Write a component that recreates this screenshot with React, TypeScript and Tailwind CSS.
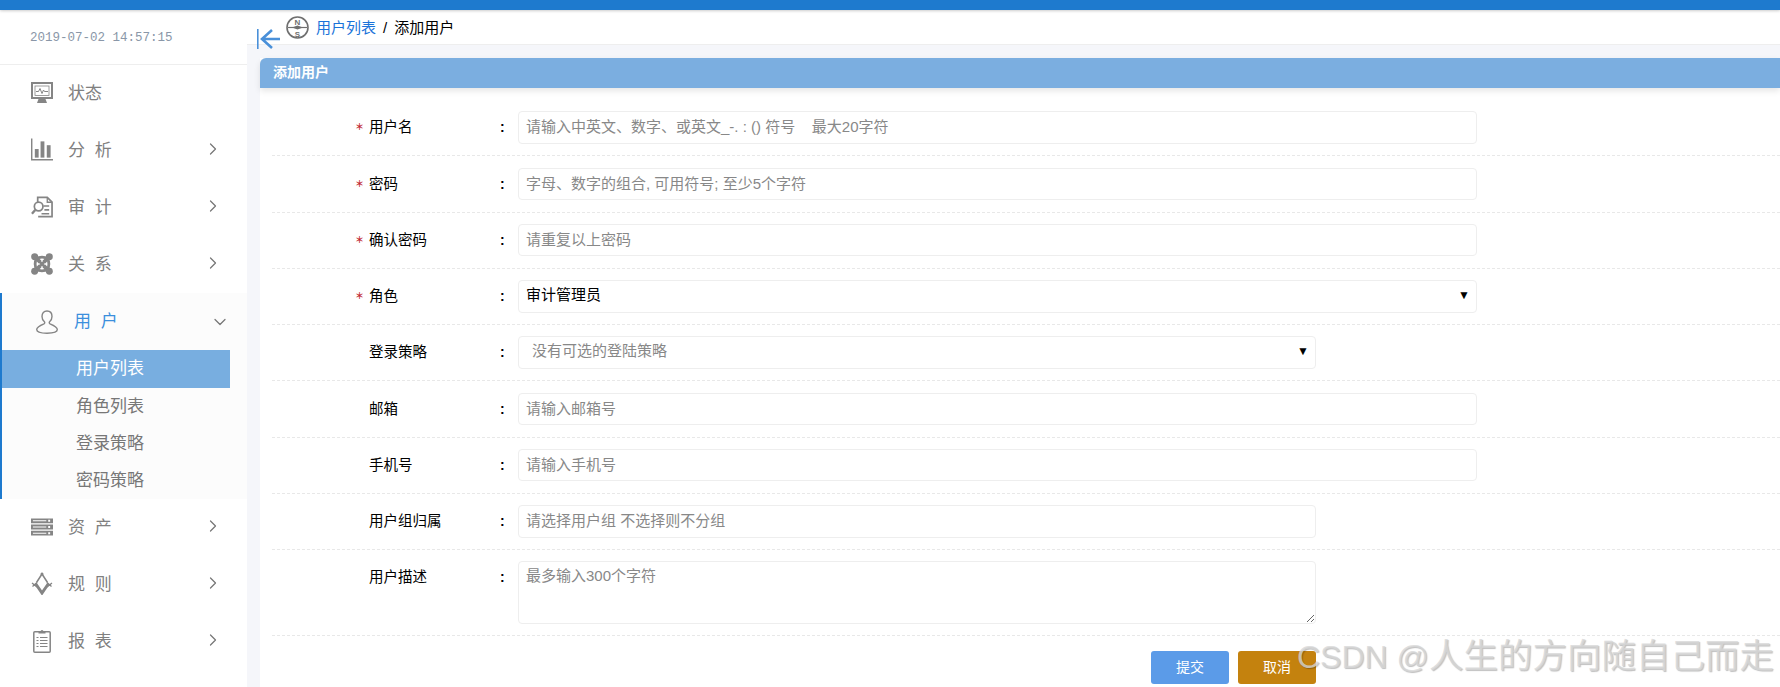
import { ChevronDown, ChevronRight } from 'lucide-react';
import type { ReactNode } from 'react';

const MonitorIcon = () => (
  <svg viewBox="0 0 22 22" className="w-[22px] h-[22px] text-[#858585]" fill="none" stroke="currentColor">
    <rect x="1" y="1" width="20" height="15" strokeWidth="2" />
    <rect x="4" y="4" width="14" height="9.5" strokeWidth="0.8" />
    <path d="M5 9.500h2.500l1.500-3 2 5 1.500-3.500 1 1.500H17" strokeWidth="1" />
    <path d="M7.500 17h7l1.500 4H6z" fill="currentColor" stroke="none" />
  </svg>
);

const BarsIcon = () => (
  <svg viewBox="0 0 23 23" className="w-[23px] h-[23px] text-[#858585]" fill="currentColor">
    <path d="M0 0h1.500v21.500H23V23H0z" />
    <rect x="4" y="11" width="4" height="9" />
    <rect x="10" y="3" width="4" height="17" />
    <rect x="16.500" y="7" width="4" height="13" />
  </svg>
);

const AuditIcon = () => (
  <svg viewBox="0 0 23 22" className="w-[23px] h-[22px] text-[#858585]" fill="none" stroke="currentColor" strokeWidth="1.800">
    <path d="M7 6V1h10l5 5v15H7.500" />
    <path d="M17 1v5h5" strokeWidth="1.400" />
    <circle cx="8" cy="10.500" r="4.500" />
    <path d="M4.500 14L1 18" strokeWidth="2.400" />
    <path d="M13 10h6M14 14h5M11 18h8" strokeWidth="1.600" />
  </svg>
);

const KnotIcon = () => (
  <svg viewBox="0 0 24 24" className="w-[24px] h-[24px] text-[#858585]" fill="none" stroke="currentColor">
    <path d="M4 4l6 6M20 4l-6 6M4 20l6-6M20 20l-6-6" strokeWidth="4.200" />
    <path d="M5 6.500q7-4 14 0M17.500 5q4 7 0 14M19 17.500q-7 4-14 0M6.500 19q-4-7 0-14" strokeWidth="3" />
    <path d="M9 9l6 6M15 9l-6 6" strokeWidth="3" />
    <g fill="currentColor" stroke="none">
      <circle cx="4" cy="4" r="3.800" />
      <circle cx="20" cy="4" r="3.800" />
      <circle cx="4" cy="20" r="3.800" />
      <circle cx="20" cy="20" r="3.800" />
    </g>
  </svg>
);

const UserIcon = () => (
  <svg viewBox="0 0 22 24" className="w-[22px] h-[24px] text-[#858585]" fill="none" stroke="currentColor" strokeWidth="1.400">
    <path d="M11 1c3.200 0 5 2.400 5 5.400 0 2.400-1 4.200-2.400 5.400-.6.600-.4 1.600.4 2 3.400 1.400 7.300 3 7.300 5.800 0 2.400-4.400 3.600-10.300 3.600S.7 22 .7 19.600c0-2.800 3.900-4.400 7.300-5.800.8-.4 1-1.400.4-2C7 10.600 6 8.800 6 6.400 6 3.400 7.800 1 11 1z" />
  </svg>
);

const ServerIcon = () => (
  <svg viewBox="0 0 23 18" className="w-[23px] h-[18px] text-[#858585]" fill="currentColor">
    <path fillRule="evenodd" d="M0 0h23v5H0zM2 2v1h14V2zM18 1.500v2h2v-2z" />
    <path fillRule="evenodd" d="M0 6.500h23v5H0zM2 8.500v1h14v-1zM18 8v2h2V8z" />
    <path fillRule="evenodd" d="M0 13h23v5H0zM2 15v1h14v-1zM18 14.500v2h2v-2z" />
  </svg>
);

const RuleIcon = () => (
  <svg viewBox="0 0 22 23" className="w-[22px] h-[23px] text-[#858585]" fill="none" stroke="currentColor">
    <path d="M4.500 11.500L11 21l6.500-9.500" strokeWidth="3" />
    <path d="M5.500 10.500L11 2l5.500 8.500" strokeWidth="1.500" />
    <path d="M1 11l5 4M21 11l-5 4M1.500 14.500l4.500-4M20.500 14.500L16 10.500" strokeWidth="1.300" />
    <circle cx="11" cy="2" r="1.500" fill="currentColor" stroke="none" />
  </svg>
);

const ClipboardIcon = () => (
  <svg viewBox="0 0 18 24" className="w-[18px] h-[24px] text-[#858585]" fill="none" stroke="currentColor">
    <rect x="0.800" y="2.800" width="16.400" height="20.400" rx="1" strokeWidth="1.500" />
    <path d="M5.500 4.500V2.500h2a1.500 1.500 0 0 1 3 0h2v2z" fill="currentColor" stroke="none" />
    <path d="M3.500 8.500h2M7 8.500h7.500M3.500 11.500h2M7 11.500h7.500M3.500 14.500h2M7 14.500h7.500M3.500 17.500h2M7 17.500h7.500" strokeWidth="1" />
  </svg>
);

const CompassIcon = () => (
  <svg viewBox="0 0 23 23" className="w-[23px] h-[23px] text-[#6f6f6f]" fill="none" stroke="currentColor">
    <circle cx="11.500" cy="11.500" r="10.500" strokeWidth="1.600" />
    <path d="M2 11.500h19" strokeWidth="1.200" />
    <path d="M6 11.500l5.500-2 5.500 2-5.500 2z" fill="currentColor" stroke="none" />
    <text x="11.500" y="8.500" textAnchor="middle" fontSize="8" fontWeight="700" fill="currentColor" stroke="none" fontFamily="Liberation Sans">N</text>
    <text x="11.500" y="20.500" textAnchor="middle" fontSize="8" fontWeight="700" fill="currentColor" stroke="none" fontFamily="Liberation Sans">S</text>
  </svg>
);

const BackArrow = () => (
  <svg viewBox="0 0 23 20" className="w-[23px] h-[20px] text-[#4a90d9]" fill="none" stroke="currentColor" strokeWidth="2.600">
    <path d="M0.800 0v20" strokeWidth="1.600" />
    <path d="M15 1L5 10l10 9M5 10h18" />
  </svg>
);

type NavItem = { icon: ReactNode; label: ReactNode };

const before: NavItem[] = [
  { icon: <MonitorIcon />, label: '状态' },
  { icon: <BarsIcon />, label: '分 析' },
  { icon: <AuditIcon />, label: '审 计' },
  { icon: <KnotIcon />, label: '关 系' },
];

const after: NavItem[] = [
  { icon: <ServerIcon />, label: '资 产' },
  { icon: <RuleIcon />, label: '规 则' },
  { icon: <ClipboardIcon />, label: '报 表' },
];

function MenuRow({ item, chevron = true }: { item: NavItem; chevron?: boolean }) {
  return (
    <div className="h-[57px] flex items-center pl-[31px] pr-[24px]">
      <div className="w-[22px] flex justify-center -translate-y-px">{item.icon}</div>
      <span className="ml-[15px] text-[17px] text-[#808080] [word-spacing:5px]">{item.label}</span>
      {chevron && <ChevronRight size={20} strokeWidth={1.5} className="ml-auto text-[#777] -translate-y-[2px]" />}
    </div>
  );
}

function Sidebar() {
  return (
    <aside className="w-[247px] shrink-0 bg-white">
      <div className="h-[55px] border-b border-[#eeeeee] pt-[19px] pl-[30px] font-['Liberation_Mono',monospace] text-[12.5px] leading-[18px] text-[#8a97a8]">
        2019-07-02 14:57:15
      </div>
      {before.map((item, i) => (
        <MenuRow key={i} item={item} chevron={i > 0} />
      ))}
      <div className="border-l-2 border-[#1e7ace] bg-[#fcfcfc]">
        <div className="h-[57px] flex items-center pl-[34px] pr-[17px]">
          <UserIcon />
          <span className="ml-[16px] text-[17px] text-[#3b8fdd] [word-spacing:5px]">用 户</span>
          <ChevronDown size={20} strokeWidth={1.5} className="ml-auto text-[#777]" />
        </div>
        <div className="w-[228px] h-[38px] bg-[#78aee0] pl-[74px] text-[17px] leading-[38px] text-white">用户列表</div>
        <div className="h-[37px] pl-[74px] text-[17px] leading-[37px] text-[#777]">角色列表</div>
        <div className="h-[37px] pl-[74px] text-[17px] leading-[37px] text-[#777]">登录策略</div>
        <div className="h-[37px] pl-[74px] text-[17px] leading-[38px] text-[#777]">密码策略</div>
      </div>
      {after.map((item, i) => (
        <MenuRow key={i} item={item} />
      ))}
    </aside>
  );
}

const inputCls =
  'h-full w-full rounded-[4px] border border-[#eeeeee] bg-white pl-[7px] pb-[2px] text-[15px] outline-none placeholder:text-[#888]';

function Row({
  label,
  required,
  rowCls,
  fieldCls,
  children,
}: {
  label: string;
  required?: boolean;
  rowCls: string;
  fieldCls: string;
  children: ReactNode;
}) {
  return (
    <div className={`flex pl-[83px] border-b border-dashed border-[#e8e8e8] ${rowCls}`}>
      <div className="w-[14px] text-[#c0272d] text-[9px] leading-[33px] font-bold">{required ? '＊' : ''}</div>
      <div className="w-[131px] text-[14.5px] leading-[33px] text-black">{label}</div>
      <div className="w-[18px] text-[14px] leading-[33px] font-bold text-black">:</div>
      <div className={`relative ${fieldCls}`}>{children}</div>
    </div>
  );
}

function SelectArrow() {
  return (
    <span className="absolute right-[7px] top-[7px] text-[12px] leading-[16px] text-black pointer-events-none">▼</span>
  );
}

export default function App() {
  return (
    <div className="relative h-screen w-full overflow-hidden bg-white font-['Liberation_Sans','Noto_Sans_CJK_SC',sans-serif]">
      <div className="relative z-10 h-[10px] bg-[#1e7ace] shadow-[0_1px_3px_rgba(0,0,0,0.2)]" />
      <div className="flex">
        <Sidebar />
        <main className="flex-1 min-h-[677px] flex flex-col bg-[#f5f6fa]">
          <div className="h-[35px] shrink-0 bg-white border-b border-[#eeeeee] flex items-start pl-[39px] pt-[6px] text-[15px] leading-[24px]">
            <CompassIcon />
            <a className="ml-[7px] text-[#1a73d9]">用户列表</a>
            <span className="mx-[7px] text-black">/</span>
            <span className="text-black">添加用户</span>
          </div>
          <section className="mt-[13px] ml-[13px] flex-1 bg-white">
            <div className="h-[30px] rounded-tl-[6px] bg-[#7baee0] pl-[13px] text-[14px] font-bold leading-[28px] text-white shadow-[0_3px_6px_rgba(0,0,0,0.1)]">
              添加用户
            </div>
            <form className="pt-[11px] pl-[12px]">
              <Row label="用户名" required rowCls="h-[57px] pt-[12px]" fieldCls="w-[959px] h-[33px]">
                <input className={inputCls} placeholder="请输入中英文、数字、或英文_-. : () 符号    最大20字符" />
              </Row>
              <Row label="密码" required rowCls="h-[57px] pt-[12px]" fieldCls="w-[959px] h-[32px]">
                <input className={inputCls} placeholder="字母、数字的组合, 可用符号; 至少5个字符" />
              </Row>
              <Row label="确认密码" required rowCls="h-[56px] pt-[11px]" fieldCls="w-[959px] h-[32px]">
                <input className={inputCls} placeholder="请重复以上密码" />
              </Row>
              <Row label="角色" required rowCls="h-[56px] pt-[11px]" fieldCls="w-[959px] h-[33px]">
                <select className={`${inputCls} appearance-none text-black`} defaultValue="audit">
                  <option value="audit">审计管理员</option>
                </select>
                <SelectArrow />
              </Row>
              <Row label="登录策略" rowCls="h-[56px] pt-[11px]" fieldCls="w-[798px] h-[33px]">
                <select className={`${inputCls} appearance-none text-[#888] !pl-[13px]`} defaultValue="none">
                  <option value="none">没有可选的登陆策略</option>
                </select>
                <SelectArrow />
              </Row>
              <Row label="邮箱" rowCls="h-[57px] pt-[12px]" fieldCls="w-[959px] h-[32px]">
                <input className={inputCls} placeholder="请输入邮箱号" />
              </Row>
              <Row label="手机号" rowCls="h-[56px] pt-[11px]" fieldCls="w-[959px] h-[32px]">
                <input className={inputCls} placeholder="请输入手机号" />
              </Row>
              <Row label="用户组归属" rowCls="h-[56px] pt-[11px]" fieldCls="w-[798px] h-[33px]">
                <input className={inputCls} placeholder="请选择用户组 不选择则不分组" />
              </Row>
              <Row label="用户描述" rowCls="h-[86px] pt-[11px]" fieldCls="w-[798px] h-[63px]">
                <textarea className={`${inputCls} pt-[3px]`} placeholder="最多输入300个字符" />
              </Row>
              <div className="w-[1044px] pt-[15px] flex justify-end gap-[9px]">
                <button type="button" className="w-[78px] h-[33px] rounded-[3px] bg-[#5b9be8] text-[14px] text-white">
                  提交
                </button>
                <button type="button" className="w-[78px] h-[33px] rounded-[3px] bg-[#c4820e] text-[14px] text-white">
                  取消
                </button>
              </div>
            </form>
          </section>
        </main>
      </div>
      <div className="absolute left-[257px] top-[29px] z-20">
        <BackArrow />
      </div>
      <div className="absolute right-[6px] top-[636px] z-20 whitespace-nowrap text-[34.5px] leading-[40px] text-[#d8d8d8]/80 [text-shadow:1px_1px_1px_rgba(0,0,0,0.25)] pointer-events-none">
        <span className="text-[32px]">CSDN @</span>人生的方向随自己而走
      </div>
    </div>
  );
}
